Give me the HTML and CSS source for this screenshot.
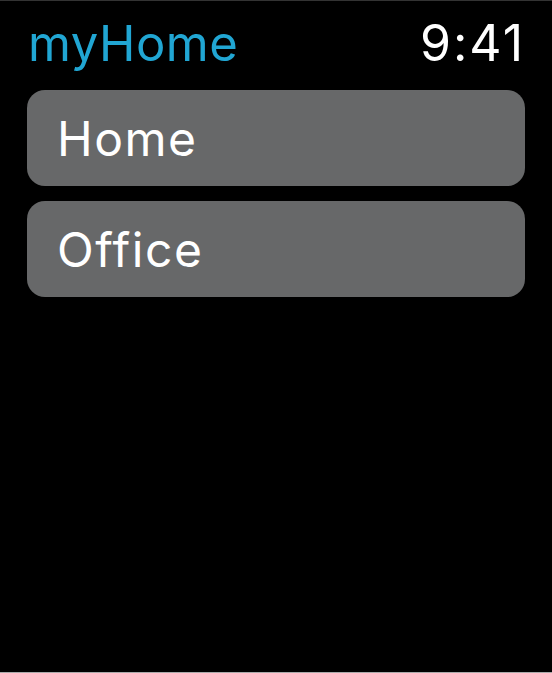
FILE: index.html
```html
<!DOCTYPE html>
<html>
<head>
<meta charset="utf-8">
<link rel="stylesheet" href="styles.css">
</head>
<body>
<div class="screen">
  <header class="bar">
    <span class="title">myHome</span>
    <span class="time">9:41</span>
  </header>
  <div class="list">
    <div class="item">Home</div>
    <div class="item">Office</div>
  </div>
</div>
</body>
</html>
```
FILE: styles.css
```css
html, body {
  margin: 0;
  padding: 0;
  background: #000;
}
.screen {
  width: 552px;
  height: 673px;
  box-sizing: border-box;
  border-top: 1px solid #333;
  border-bottom: 1px solid #aaa;
  background: #000;
  padding: 0 27px;
  font-family: Inter, "Liberation Sans", sans-serif;
  display: flex;
  flex-direction: column;
}
.bar {
  display: flex;
  justify-content: space-between;
  align-items: baseline;
  height: 89px;
  box-sizing: border-box;
  padding-top: 12px;
}
.title {
  color: #21a6d3;
  font-size: 49px;
  letter-spacing: 0.5px;
  padding-left: 1px;
  line-height: 1.2;
}
.time {
  color: #fff;
  font-size: 50px;
  letter-spacing: 2px;
  margin-right: 0;
  line-height: 1.2;
}
.list {
  display: flex;
  flex-direction: column;
  gap: 15px;
}
.item {
  height: 96px;
  border-radius: 18px;
  background: #676869;
  color: #fff;
  font-size: 48px;
  letter-spacing: 1.5px;
  display: flex;
  align-items: center;
  padding-left: 30px;
}
```
